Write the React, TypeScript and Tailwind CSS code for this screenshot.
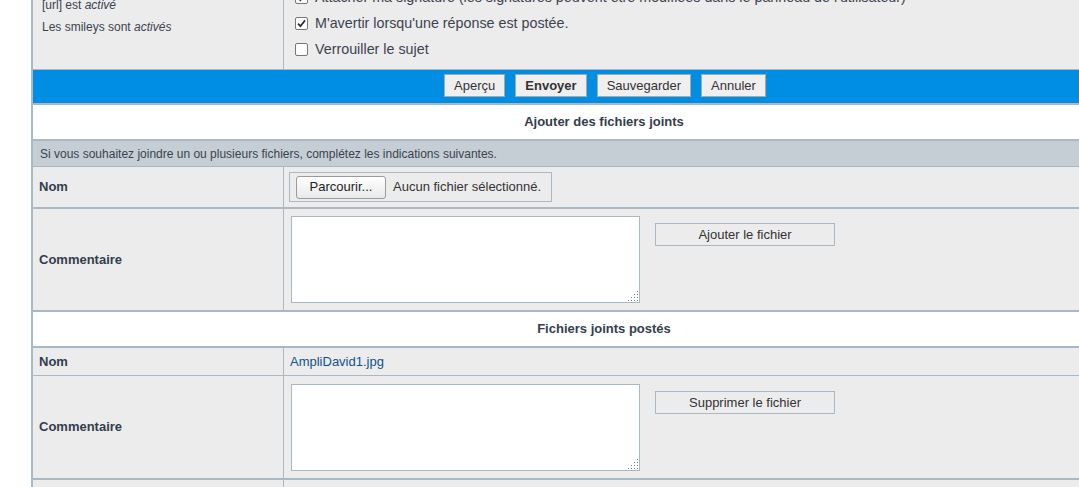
import React from "react";

const Check = ({ checked }: { checked?: boolean }) => (
  <span className="inline-flex w-[13px] h-[13px] shrink-0 items-center justify-center border border-[#767676] rounded-[2px] bg-white">
    {checked && (
      <svg width="11" height="11" viewBox="0 0 11 11">
        <path d="M2 5.6 L4.4 8.2 L9 2.4" fill="none" stroke="#2b2b2b" strokeWidth="1.7" />
      </svg>
    )}
  </span>
);

const Grip = () => {
  const dots: React.ReactElement[] = [];
  for (let i = 0; i < 4; i++) {
    for (let j = 0; j < 4; j++) {
      if (i + j >= 3) {
        dots.push(<rect key={`${i}-${j}`} x={i * 3} y={j * 3} width="1" height="1" fill="#7a7a7a" />);
      }
    }
  }
  return (
    <svg className="absolute right-[1px] bottom-[1px]" width="10" height="10" viewBox="0 0 10 10">
      {dots}
    </svg>
  );
};

const TextBox = () => (
  <div className="relative w-[349px] h-[87px] border border-[#A9B8C2] bg-white shrink-0">
    <textarea className="block w-full h-full resize-none outline-none bg-white" />
    <Grip />
  </div>
);

const FlatButton = ({ label }: { label: string }) => (
  <button className="mt-[7px] w-[180px] h-[23px] border border-[#A9B8C2] bg-[#ECECEC] text-[13px] text-[#333333] flex items-center justify-center">
    {label}
  </button>
);

const BarButton = ({ label, bold }: { label: string; bold?: boolean }) => (
  <button
    className={`h-[23px] px-[9px] border border-[#A8A8A8] bg-[#EFEFEF] text-[13px] text-[#333333] flex items-center ${bold ? "font-bold" : ""}`}
  >
    {label}
  </button>
);

export default function App() {
  const labelCell =
    "w-[251px] shrink-0 border-r border-[#A9B8C2] pl-[6px] flex items-center font-bold text-[13px] text-[#333D4D]";
  return (
    <div className="h-screen w-screen overflow-hidden bg-white font-['Liberation_Sans',Arial,sans-serif]">
      <div className="ml-[31px] w-[1146px] -mt-[19px] border-x-2 border-[#A9B8C2]">
        {/* options row */}
        <div className="flex h-[89px] bg-[#ECECEC] border-b border-[#A9B8C2]">
          <div className="w-[251px] shrink-0 border-r border-[#A9B8C2] pl-[9px] pt-[13px] text-[12px] leading-[22px] text-[#3C4350]">
            <div>
              [url] est <i>activé</i>
            </div>
            <div>
              Les smileys sont <i>activés</i>
            </div>
          </div>
          <div className="pl-[11px] pt-[3px] text-[14.3px] leading-[26px] text-[#3C4350]">
            <div className="flex items-center gap-[7px] h-[26px]">
              <Check checked />
              <span>Attacher ma signature (les signatures peuvent être modifiées dans le panneau de l'utilisateur)</span>
            </div>
            <div className="flex items-center gap-[7px] h-[26px]">
              <Check checked />
              <span>M'avertir lorsqu'une réponse est postée.</span>
            </div>
            <div className="flex items-center gap-[7px] h-[26px]">
              <Check />
              <span>Verrouiller le sujet</span>
            </div>
          </div>
        </div>

        {/* blue bar */}
        <div className="h-[35px] bg-[#008DE4] border-b-2 border-[#A9B8C2] flex items-center justify-center gap-[10px] pb-[2px] pl-[2px]">
          <BarButton label="Aperçu" />
          <BarButton label="Envoyer" bold />
          <BarButton label="Sauvegarder" />
          <BarButton label="Annuler" />
        </div>

        {/* header 1 */}
        <div className="h-[36px] bg-white border-b-2 border-[#A9B8C2] flex items-center justify-center font-bold text-[13px] text-[#333D4D]">
          Ajouter des fichiers joints
        </div>

        {/* info row */}
        <div className="h-[26px] bg-[#C5CDD5] border-b border-[#A9B8C2] pl-[7px] flex items-center text-[12px] text-[#3C4350]">
          Si vous souhaitez joindre un ou plusieurs fichiers, complétez les indications suivantes.
        </div>

        {/* Nom */}
        <div className="flex h-[42px] bg-[#ECECEC] border-b-2 border-[#A9B8C2]">
          <div className={labelCell}>Nom</div>
          <div className="pl-[5px] flex items-center">
            <div className="w-[263px] h-[30px] border border-[#A9B8C2] flex items-center pl-[6px] gap-[7px] text-[13px] text-[#333333]">
              <button className="w-[90px] h-[23px] rounded-[3px] border border-[#9A9A9A] bg-gradient-to-b from-white to-[#E9E9E9] text-[13px] text-[#222222] flex items-center justify-center">
                Parcourir...
              </button>
              <span>Aucun fichier sélectionné.</span>
            </div>
          </div>
        </div>

        {/* Commentaire */}
        <div className="flex h-[103px] bg-[#ECECEC] border-b-2 border-[#A9B8C2]">
          <div className={labelCell}>Commentaire</div>
          <div className="pl-[7px] pt-[7px] flex items-start gap-[15px]">
            <TextBox />
            <FlatButton label="Ajouter le fichier" />
          </div>
        </div>

        {/* header 2 */}
        <div className="h-[36px] bg-white border-b-2 border-[#A9B8C2] flex items-center justify-center font-bold text-[13px] text-[#333D4D]">
          Fichiers joints postés
        </div>

        {/* Nom 2 */}
        <div className="flex h-[28px] bg-[#ECECEC] border-b border-[#A9B8C2]">
          <div className={labelCell}>Nom</div>
          <div className="pl-[6px] flex items-center text-[13px] text-[#105289]">
            <a>AmpliDavid1.jpg</a>
          </div>
        </div>

        {/* Commentaire 2 */}
        <div className="flex h-[104px] bg-[#ECECEC] border-b-2 border-[#A9B8C2]">
          <div className={labelCell}>Commentaire</div>
          <div className="pl-[7px] pt-[8px] flex items-start gap-[15px]">
            <TextBox />
            <FlatButton label="Supprimer le fichier" />
          </div>
        </div>

        {/* next row */}
        <div className="flex h-[40px] bg-[#ECECEC]">
          <div className="w-[251px] shrink-0 border-r border-[#A9B8C2]" />
          <div />
        </div>
      </div>
    </div>
  );
}
